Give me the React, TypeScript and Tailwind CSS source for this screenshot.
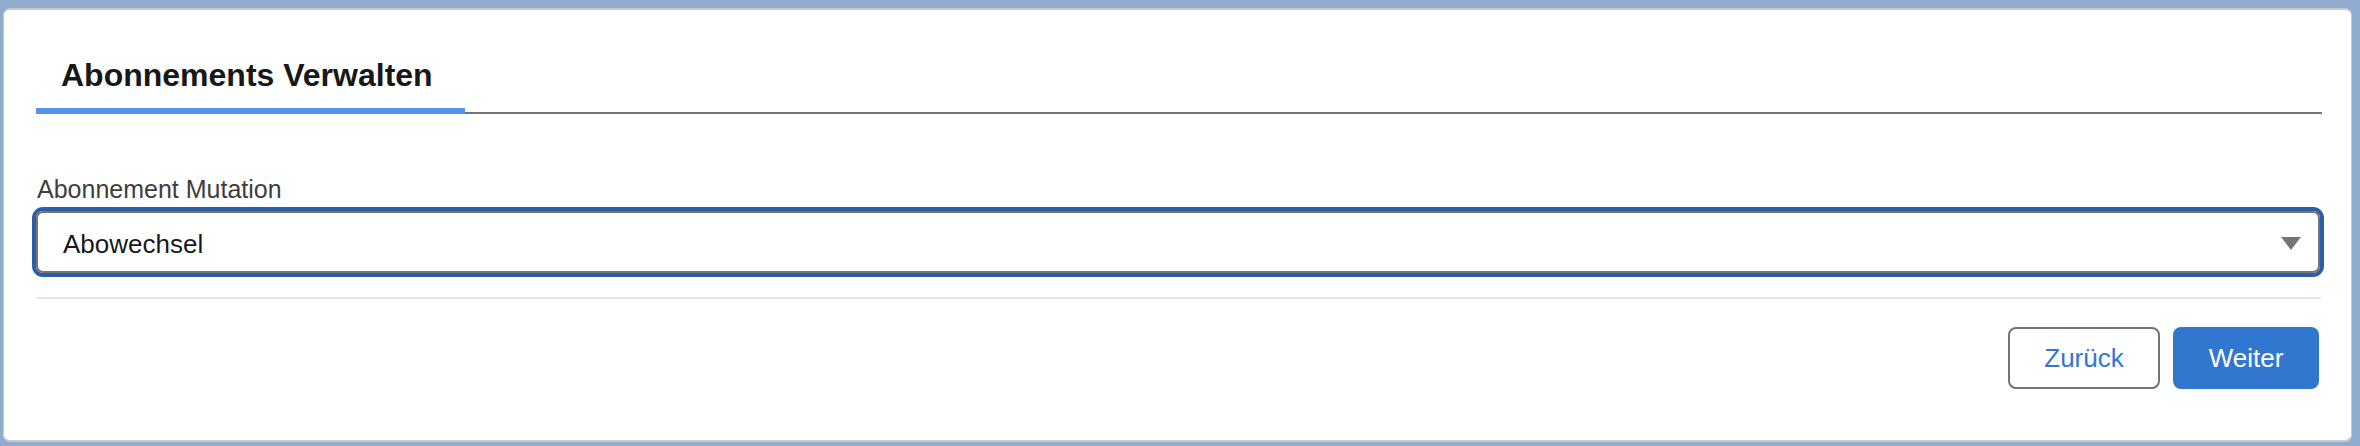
import React from "react";

const font = { fontFamily: '"Liberation Sans", Arial, sans-serif' };

export default function App() {
  return (
    <div
      className="w-[2360px] h-[446px] bg-[#8fabcd] pt-[8px] pl-[3px] pr-[8px] pb-[4px] overflow-hidden"
      style={font}
    >
      <div className="h-[434px] bg-white rounded-[7px] border-x border-y-2 border-[#c9c9c9] flex flex-col">
        {/* Tabs */}
        <div className="ml-[32px] mr-[29px] border-b-2 border-[#747474] flex">
          <div className="w-[429px] -mb-[2px] border-b-[6px] border-[#5592ee] pt-[46px] pb-[14px] pl-[25px]">
            <h1 className="text-[32px] leading-[38px] font-bold text-[#181818]">
              Abonnements Verwalten
            </h1>
          </div>
        </div>

        {/* Field */}
        <div className="ml-[28px] mr-[27px] mt-[61px]">
          <label className="block pl-[5px] text-[25px] leading-[28px] text-[#3e3e3c]">
            Abonnement Mutation
          </label>
          <div className="mt-[4px] h-[70px] rounded-[11px] border-4 border-[#2b5ea7]">
            <div className="h-full rounded-[7px] border-2 border-[#747474] flex items-center justify-between pl-[25px] pr-[17px]">
              <span className="pt-[3px] text-[26px] leading-[30px] text-[#181818]">
                Abowechsel
              </span>
              <svg width="20" height="13" viewBox="0 0 20 13" className="mt-[2px]">
                <path d="M0 0 H20 L10 13 Z" fill="#747474" />
              </svg>
            </div>
          </div>
        </div>

        <div className="ml-[32px] mr-[30px] mt-[20px] h-[2px] bg-[#e5e5e5]" />

        {/* Footer */}
        <div className="mt-[28px] mr-[32px] flex justify-end gap-[13px]">
          <button className="w-[152px] h-[62px] rounded-[8px] border-2 border-[#747474] bg-white text-[26px] text-[#3476d0] flex items-center justify-center">
            Zurück
          </button>
          <button className="w-[146px] h-[62px] rounded-[8px] bg-[#3277cf] text-[26px] text-white flex items-center justify-center">
            Weiter
          </button>
        </div>
      </div>
    </div>
  );
}
